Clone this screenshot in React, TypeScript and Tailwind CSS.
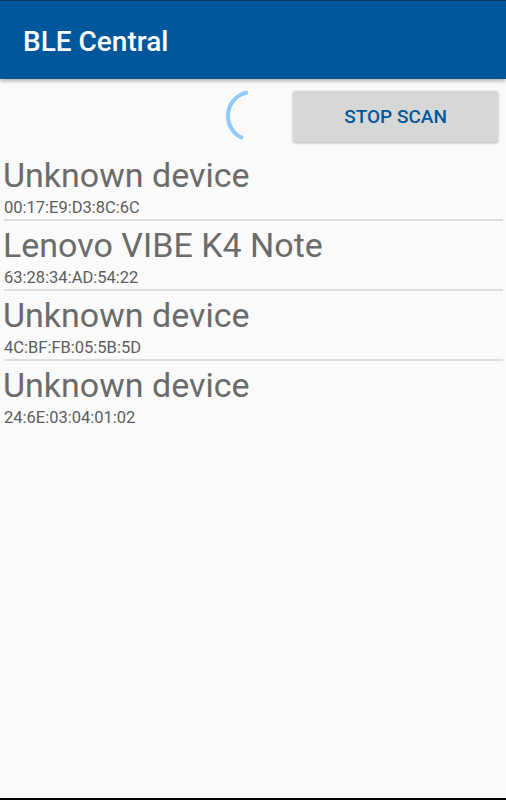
import React from "react";

const devices = [
  { name: "Unknown device", mac: "00:17:E9:D3:8C:6C" },
  { name: "Lenovo VIBE K4 Note", mac: "63:28:34:AD:54:22" },
  { name: "Unknown device", mac: "4C:BF:FB:05:5B:5D" },
  { name: "Unknown device", mac: "24:6E:03:04:01:02" },
];

export default function App() {
  return (
    <div
      className="w-[506px] h-[800px] bg-[#fafafa] flex flex-col overflow-hidden"
      style={{ fontFamily: "Roboto, 'Liberation Sans', sans-serif" }}
    >
      <div className="h-px bg-[#0b3d63]" />
      <div className="h-[78px] bg-[#01579b] flex items-center pl-[23px] pt-[4px] shadow-[0_2px_4px_rgba(0,0,0,0.3)] relative z-10">
        <span className="text-white text-[28px] font-medium">BLE Central</span>
      </div>
      <div className="flex items-center justify-end pt-[11px] pr-[8px]">
        <svg width="52" height="52" viewBox="0 0 52 52" className="mr-[15px]">
          <path
            d="M 21.7 2.4 A 24 24 0 0 0 16.8 48.2"
            fill="none"
            stroke="#90caf9"
            strokeWidth="4"
          />
        </svg>
        <button className="w-[205px] h-[51px] bg-[#d6d7d7] rounded-[2px] shadow-[0_1px_3px_rgba(0,0,0,0.3)] text-[#01579b] text-[19px] font-medium pt-[3px]">
          STOP SCAN
        </button>
      </div>
      <div className="flex flex-col pt-[13px]">
        {devices.map((d, i) => (
          <div key={i} className="flex flex-col">
            <div className="pl-[3px] text-[34px] leading-[40px] text-[#6b6b6b]">{d.name}</div>
            <div className="pl-[4px] mt-[3px] text-[16.5px] leading-[20px] text-[#5e5e5e]">{d.mac}</div>
            {i < devices.length - 1 && (
              <div className="ml-[4px] mr-[3px] mt-[1px] mb-[4px] h-[2px] bg-[#dedede]" />
            )}
          </div>
        ))}
      </div>
      <div className="flex-1" />
      <div className="h-[2px] bg-black" />
    </div>
  );
}
